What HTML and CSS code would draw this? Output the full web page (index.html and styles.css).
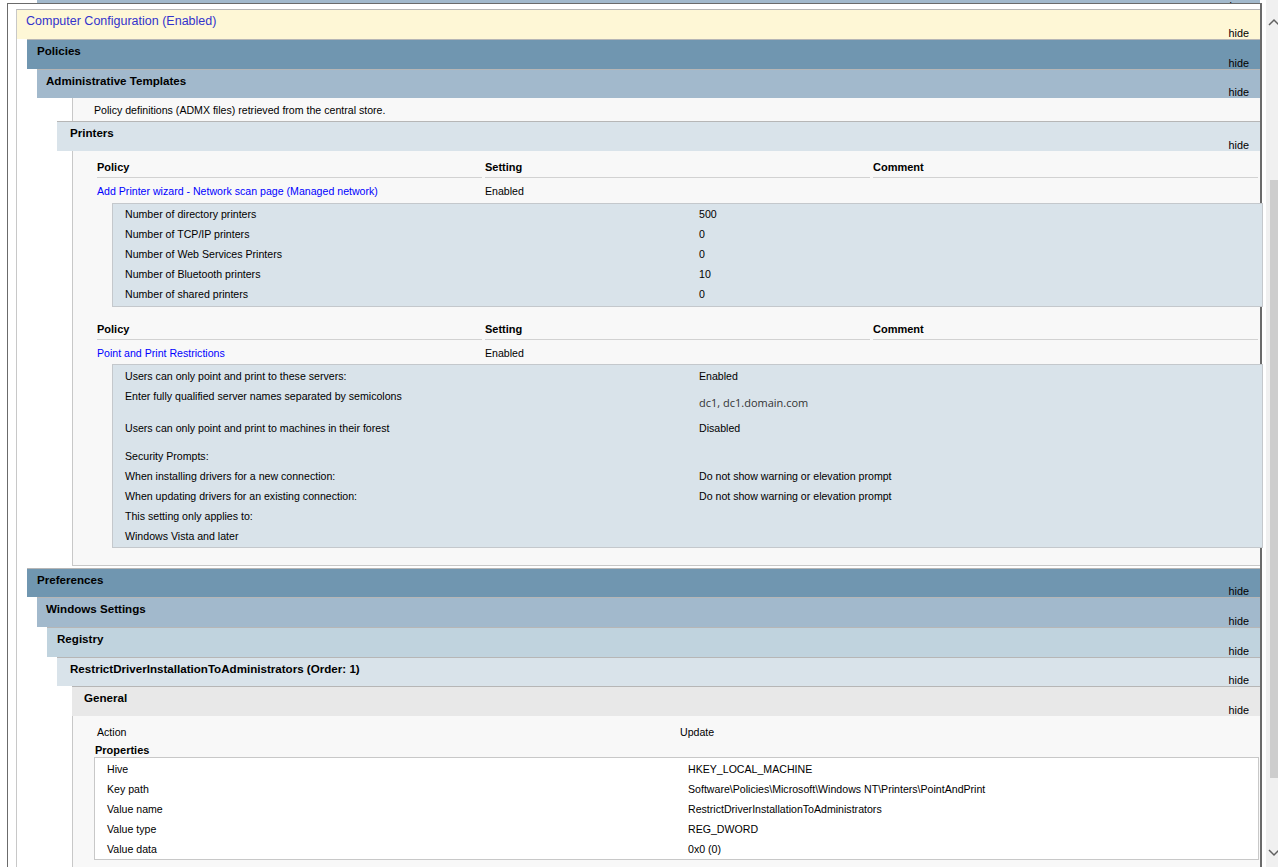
FILE: index.html
```html
<!DOCTYPE html>
<html lang="en">
<head>
<meta charset="utf-8">
<title>Group Policy Report</title>
<link rel="stylesheet" href="styles.css">
</head>
<body>
<div class="screen">
  <div class="viewport">
    <div class="prevband"><span class="show">show</span></div>
    <div class="frame">
      <div class="sec0">
        <div class="he he0"><span class="title">Computer Configuration (Enabled)</span><span class="hide">hide</span></div>
        <div class="body0">
          <div class="he he1 lvl1"><span class="title">Policies</span><span class="hide">hide</span></div>
          <div class="he he2 lvl2"><span class="title">Administrative Templates</span><span class="hide">hide</span></div>
          <div class="cont note">Policy definitions (ADMX files) retrieved from the central store.</div>
          <div class="he he3 lvl4"><span class="title pad13">Printers</span><span class="hide">hide</span></div>
          <div class="cont printers">
            <div class="ptable">
              <div class="th">Policy</div><div class="th">Setting</div><div class="th">Comment</div>
              <div class="td link">Add Printer wizard - Network scan page (Managed network)</div><div class="td">Enabled</div><div class="td"></div>
            </div>
            <div class="dbox">
              <div class="drow"><span>Number of directory printers</span><span>500</span></div>
              <div class="drow"><span>Number of TCP/IP printers</span><span>0</span></div>
              <div class="drow"><span>Number of Web Services Printers</span><span>0</span></div>
              <div class="drow"><span>Number of Bluetooth printers</span><span>10</span></div>
              <div class="drow"><span>Number of shared printers</span><span>0</span></div>
            </div>
            <div class="ptable second">
              <div class="th">Policy</div><div class="th">Setting</div><div class="th">Comment</div>
              <div class="td link">Point and Print Restrictions</div><div class="td">Enabled</div><div class="td"></div>
            </div>
            <div class="dbox box2">
              <div class="drow"><span>Users can only point and print to these servers:</span><span>Enabled</span></div>
              <div class="drow tall"><span>Enter fully qualified server names separated by semicolons</span><span class="mono">dc1, dc1.domain.com</span></div>
              <div class="drow"><span>Users can only point and print to machines in their forest</span><span>Disabled</span></div>
              <div class="spacer"></div>
              <div class="drow"><span>Security Prompts:</span><span></span></div>
              <div class="drow"><span>When installing drivers for a new connection:</span><span>Do not show warning or elevation prompt</span></div>
              <div class="drow"><span>When updating drivers for an existing connection:</span><span>Do not show warning or elevation prompt</span></div>
              <div class="drow"><span>This setting only applies to:</span><span></span></div>
              <div class="drow"><span>Windows Vista and later</span><span></span></div>
            </div>
          </div>
          <div class="he he1 lvl1 pref"><span class="title">Preferences</span><span class="hide">hide</span></div>
          <div class="he he2 lvl2"><span class="title">Windows Settings</span><span class="hide">hide</span></div>
          <div class="he he3b lvl3"><span class="title">Registry</span><span class="hide">hide</span></div>
          <div class="he he3 lvl4"><span class="title pad13">RestrictDriverInstallationToAdministrators (Order: 1)</span><span class="hide">hide</span></div>
          <div class="he he5 lvl5"><span class="title pad12">General</span><span class="hide">hide</span></div>
          <div class="cont general">
            <div class="arow"><span>Action</span><span>Update</span></div>
            <div class="proptitle">Properties</div>
            <div class="pbox">
              <div class="prow"><span>Hive</span><span>HKEY_LOCAL_MACHINE</span></div>
              <div class="prow"><span>Key path</span><span>Software\Policies\Microsoft\Windows NT\Printers\PointAndPrint</span></div>
              <div class="prow"><span>Value name</span><span>RestrictDriverInstallationToAdministrators</span></div>
              <div class="prow"><span>Value type</span><span>REG_DWORD</span></div>
              <div class="prow"><span>Value data</span><span>0x0 (0)</span></div>
            </div>
          </div>
        </div>
      </div>
    </div>
  </div>
  <div class="scrollbar">
    <div class="track">
      <svg class="arrow up" width="12" height="10" viewBox="0 0 12 10"><path d="M3 8 L8 3 L13 8" fill="none" stroke="#606060" stroke-width="1.5"/></svg>
      <div class="thumb"></div>
      <svg class="arrow down" width="12" height="10" viewBox="0 0 12 10"><path d="M3 2 L8 7 L13 2" fill="none" stroke="#606060" stroke-width="1.5"/></svg>
    </div>
  </div>
</div>
</body>
</html>
```
FILE: styles.css
```css
* { box-sizing: border-box; }
html, body { margin: 0; padding: 0; }
body {
  width: 1278px;
  height: 867px;
  overflow: hidden;
  background: #ffffff;
  font-family: "Liberation Sans", Arial, sans-serif;
  font-size: 10.6px;
  color: #000000;
}
.screen { display: flex; height: 867px; }
.viewport { width: 1262px; flex: none; }

.prevband {
  margin-left: 37px;
  width: 1223px;
  height: 3px;
  background: #a2b9cc;
  overflow: hidden;
  text-align: right;
  padding-right: 11px;
}
.prevband .show {
  display: inline-block;
  margin-top: -11px;
  line-height: 12px;
  text-decoration: underline;
}

.frame {
  margin-left: 7px;
  height: 864px;
  border-top: 1px solid #6b6b6b;
  border-left: 1px solid #6b6b6b;
  border-right: 2px solid #6b6b6b;
  padding-top: 5px;
}
.sec0 { margin-left: 8px; }

.he {
  display: flex;
  justify-content: space-between;
  height: 29.6px;
  border-top: 1px solid #b6b6b6;
  padding: 4px 11px 0 10px;
  font-weight: bold;
  font-size: 11.6px;
}
.he .title { line-height: 14px; }
.he .hide {
  align-self: flex-end;
  line-height: 12px;
  font-weight: normal;
  font-size: 10.8px;
}
.he0 {
  height: 30px;
  background: #fef7d6;
  border-left: 1px solid #c8c8c8;
  font-weight: normal;
  padding-left: 9px;
  padding-top: 4px;
}
.he0 .title { color: #3333cc; font-size: 12.5px; line-height: 15px; }
.he1 { background: #7096b0; }
.he2 { background: #a2b9cc; padding-left: 9px; }
.he3 { background: #d9e3ea; }
.he3b { background: #c0d3de; }
.he5 { background: #e8e8e8; }
.pad13 { padding-left: 3px; }
.pad12 { padding-left: 2px; }

.lvl1 { margin-left: 10px; }
.lvl2 { margin-left: 20px; }
.lvl3 { margin-left: 30px; }
.lvl4 { margin-left: 40px; }
.lvl5 { margin-left: 55px; }

.body0 { border-left: 1px solid #c8c8c8; }

.cont {
  margin-left: 55px;
  background: #f8f8f8;
  border-left: 1px solid #c8c8c8;
}
.note {
  height: 23px;
  padding: 5px 0 0 21px;
  line-height: 14px;
}
.printers {
  padding: 6px 0 17px;
  border-bottom: 1px solid #c8c8c8;
  margin-bottom: 2px;
}
.ptable {
  display: grid;
  grid-template-columns: repeat(3, 1fr);
  column-gap: 3px;
  margin: 0 2px 0 24px;
}
.ptable.second { margin-top: 12px; }
.th {
  font-weight: bold;
  font-size: 11px;
  line-height: 20px;
  height: 21px;
  border-bottom: 1px solid #d2d2d2;
}
.td { padding-top: 3px; line-height: 20px; }
.link { color: #0000ff; }

.dbox {
  margin: 2px -3px 0 39px;
  background: #d9e3ea;
  border: 1px solid #c4c8cc;
  padding: 0 0 2px 12px;
}
.dbox.box2 { margin-top: 1px; padding-top: 1px; padding-bottom: 1px; }
.drow {
  display: grid;
  grid-template-columns: 574px 1fr;
  line-height: 20px;
  height: 20px;
}
.drow.tall { height: 32px; }
.mono {
  font-family: "Open Sans", "DejaVu Sans", sans-serif;
  font-size: 11px;
  color: #333333;
  padding-top: 7px;
}
.spacer { height: 8px; }

.general { padding: 6px 0 20px; height: 200px; }
.arow {
  display: grid;
  grid-template-columns: 583px 1fr;
  margin-left: 24px;
  line-height: 20px;
}
.proptitle {
  font-weight: bold;
  font-size: 11px;
  margin: 1px 0 0 22px;
  line-height: 14px;
}
.pbox {
  margin: 0 1px 0 21px;
  background: #ffffff;
  border: 1px solid #c8c8c8;
  padding: 1px 0 0 12px;
}
.prow {
  display: grid;
  grid-template-columns: 581px 1fr;
  line-height: 20px;
  height: 20px;
}

.scrollbar { flex: none; width: 16px; padding-left: 4px; }
.track {
  height: 867px;
  background: #f0f0f0;
  display: flex;
  flex-direction: column;
}
.arrow { display: block; flex: none; }
.arrow.up { margin-top: 17px; }
.thumb {
  flex: none;
  margin: 153px 0 0 4px;
  height: 598px;
  background: #cdcdcd;
}
.arrow.down { margin-top: 70px; }
```
